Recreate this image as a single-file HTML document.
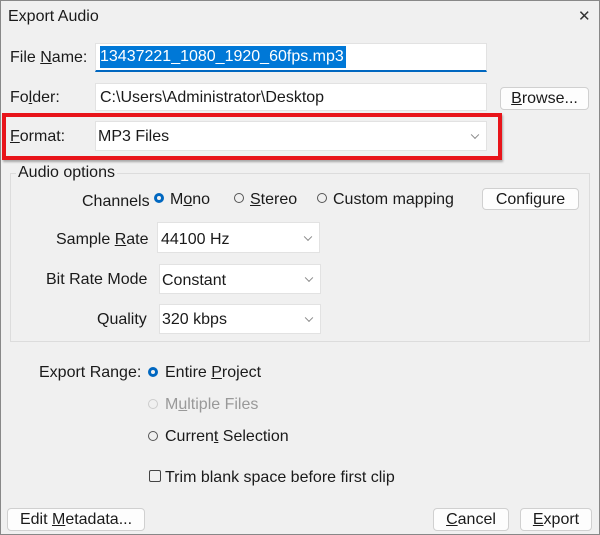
<!DOCTYPE html><html><head><style>
body{margin:0;width:600px;height:535px;overflow:hidden;background:#f0f0f0;font-family:"Liberation Sans",sans-serif;font-size:16px;color:#1a1a1a;position:relative}
.a{position:absolute;white-space:nowrap}
.in{position:absolute;background:#fff;border:1px solid #e2e2e2;box-sizing:border-box}
.btn{position:absolute;background:#fdfdfd;border:1px solid #d0d0d0;border-radius:4px;box-sizing:border-box;text-align:center;line-height:21px}
.chev{position:absolute;right:8px;top:50%;width:5px;height:5px;border-right:1px solid #888;border-bottom:1px solid #888;transform:translateY(-70%) rotate(45deg)}
.r{position:absolute;width:10px;height:10px;border:1px solid #555;border-radius:50%;box-sizing:border-box}
.rs{border:3px solid #0067c0;}
u{text-decoration:underline}
</style></head><body>
<div style="position:absolute;left:0;top:0;width:598px;height:533px;border:1px solid #888"></div>
<div class="a" style="left:8px;top:8px">Export Audio</div>
<div class="a" style="left:578px;top:7px;font-size:15px;color:#333">✕</div>

<div class="a" style="left:10px;top:49px">File <u>N</u>ame:</div>
<div class="in" style="left:95px;top:43px;width:392px;height:29px;border-bottom:2px solid #0067c0"></div>
<div class="a" style="left:100px;top:46px;height:22px;width:246px;background:#0078d7;color:#fff;line-height:22px">13437221_1080_1920_60fps.mp3</div>

<div class="a" style="left:10px;top:89px">Fo<u>l</u>der:</div>
<div class="in" style="left:95px;top:83px;width:392px;height:28px"></div>
<div class="a" style="left:100px;top:89px">C:\Users\Administrator\Desktop</div>
<div class="btn" style="left:500px;top:87px;width:89px;height:23px"><u>B</u>rowse...</div>

<div class="a" style="left:2px;top:113px;width:492px;height:39px;border:4px solid #e8141a;box-shadow:1px 2px 2px rgba(0,0,0,.3)"></div>
<div class="a" style="left:10px;top:128px"><u>F</u>ormat:</div>
<div class="in" style="left:95px;top:121px;width:392px;height:30px"><div class="chev"></div></div>
<div class="a" style="left:98px;top:128px">MP3 Files</div>

<div class="a" style="left:10px;top:173px;width:578px;height:167px;border:1px solid #dcdcdc"></div>
<div class="a" style="left:16px;top:164px;background:#f0f0f0;padding:0 2px">Audio options</div>

<div class="a" style="left:82px;top:193px">Channels</div>
<div class="r rs" style="left:154px;top:193px"></div><div class="a" style="left:170px;top:191px">M<u>o</u>no</div>
<div class="r" style="left:234px;top:193px"></div><div class="a" style="left:250px;top:191px"><u>S</u>tereo</div>
<div class="r" style="left:317px;top:193px"></div><div class="a" style="left:333px;top:191px">Custom mappin<u>g</u></div>
<div class="btn" style="left:482px;top:188px;width:97px;height:22px">Configure</div>

<div class="a" style="left:56px;top:231px">Sample <u>R</u>ate</div>
<div class="in" style="left:157px;top:222px;width:163px;height:31px"><div class="chev"></div></div>
<div class="a" style="left:161px;top:231px">44100 Hz</div>

<div class="a" style="left:46px;top:271px">Bit Rate Mode</div>
<div class="in" style="left:159px;top:264px;width:162px;height:30px"><div class="chev"></div></div>
<div class="a" style="left:162px;top:272px">Constant</div>

<div class="a" style="left:97px;top:311px">Quality</div>
<div class="in" style="left:159px;top:304px;width:162px;height:30px"><div class="chev"></div></div>
<div class="a" style="left:162px;top:311px">320 kbps</div>

<div class="a" style="left:39px;top:364px">Export Range:</div>
<div class="r rs" style="left:148px;top:367px"></div><div class="a" style="left:165px;top:364px">Entire <u>P</u>roject</div>
<div class="r" style="left:148px;top:399px;border-color:#ccc"></div><div class="a" style="left:165px;top:396px;color:#999">M<u>u</u>ltiple Files</div>
<div class="r" style="left:148px;top:431px"></div><div class="a" style="left:165px;top:428px">Curren<u>t</u> Selection</div>
<div class="a" style="left:149px;top:470px;width:10px;height:10px;border:1px solid #444;border-radius:2px"></div><div class="a" style="left:165px;top:469px">Trim blank space before first clip</div>

<div class="btn" style="left:7px;top:508px;width:138px;height:23px">Edit <u>M</u>etadata...</div>
<div class="btn" style="left:433px;top:508px;width:76px;height:23px"><u>C</u>ancel</div>
<div class="btn" style="left:520px;top:508px;width:72px;height:23px"><u>E</u>xport</div>
</body></html>
